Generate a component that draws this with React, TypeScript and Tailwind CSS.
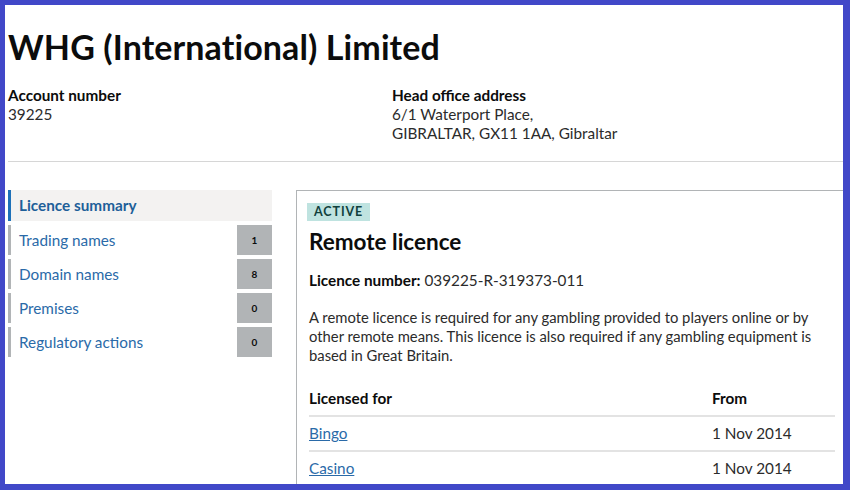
import React from "react";

const navItems = [
  { label: "Trading names", count: "1" },
  { label: "Domain names", count: "8" },
  { label: "Premises", count: "0" },
  { label: "Regulatory actions", count: "0" },
];

export default function App() {
  return (
    <div className="w-[850px] h-[490px] overflow-hidden bg-white border-l-[5px] border-t-[5px] border-r-[7px] border-b-[6px] border-[#4148c8] font-['Lato','Noto_Sans',sans-serif] text-[#0b0c0c]">
      <div className="pl-[3px]">
        <h1 className="text-[34px] font-bold leading-none pt-[25px] tracking-[0.1px]">WHG (International) Limited</h1>
        <div className="flex mt-[22px] text-[15.3px] leading-[19px]">
          <div className="w-[384px]">
            <div className="font-bold">Account number</div>
            <div className="text-[#2b2b2b]">39225</div>
          </div>
          <div>
            <div className="font-bold">Head office address</div>
            <div className="text-[#2b2b2b]">6/1 Waterport Place,</div>
            <div className="text-[#2b2b2b]">GIBRALTAR, GX11 1AA, Gibraltar</div>
          </div>
        </div>
        <div className="mt-[18px] h-px bg-[#d6d6d6]"></div>
        <div className="flex gap-[24px] mt-[28px]">
          <nav className="w-[264px] shrink-0 flex flex-col gap-[4px] text-[15.3px]">
            <div className="h-[31px] flex items-center pl-[8px] border-l-[3px] border-[#1d70b8] bg-[#f3f2f1] font-bold text-[#1d5f99]">
              Licence summary
            </div>
            {navItems.map((n) => (
              <div key={n.label} className="h-[30px] flex items-center justify-between pl-[8px] border-l-[3px] border-[#b1b4b6] text-[#2a6aa8]">
                <span>{n.label}</span>
                <span className="w-[35px] h-[30px] bg-[#b1b4b6] flex items-center justify-center text-[10px] font-bold text-[#0b0c0c]">{n.count}</span>
              </div>
            ))}
          </nav>
          <section className="w-[560px] shrink-0 border border-[#b1b4b6] pl-[12px] pr-[12px] pt-[12px] h-[320px]">
            <div className="flex">
              <span className="bg-[#bfe3e0] text-[#10403c] text-[12.5px] font-bold tracking-[0.9px] px-[7px] h-[18px] leading-[18px] -ml-[2px]">ACTIVE</span>
            </div>
            <h2 className="text-[22.5px] font-bold mt-[8px] leading-[26px]">Remote licence</h2>
            <p className="text-[15.3px] mt-[16px] leading-[19px]"><span className="font-bold">Licence number:</span> <span className="text-[#2b2b2b]">039225-R-319373-011</span></p>
            <p className="text-[14.8px] mt-[18px] leading-[19px] text-[#2b2b2b] whitespace-nowrap">
              A remote licence is required for any gambling provided to players online or by
              <br />
              other remote means. This licence is also required if any gambling equipment is
              <br />
              based in Great Britain.
            </p>
            <div className="mt-[24px] w-[526px] text-[15.3px] leading-[19px]">
              <div className="flex pb-[7px] border-b-2 border-[#e3e3e3] font-bold">
                <div className="w-[403px]">Licensed for</div>
                <div>From</div>
              </div>
              <div className="flex pt-[7px] pb-[7px] border-b-2 border-[#e3e3e3]">
                <div className="w-[403px]"><a className="underline text-[#2a6aa8]">Bingo</a></div>
                <div className="text-[#2b2b2b]">1 Nov 2014</div>
              </div>
              <div className="flex pt-[7px] pb-[7px]">
                <div className="w-[403px]"><a className="underline text-[#2a6aa8]">Casino</a></div>
                <div className="text-[#2b2b2b]">1 Nov 2014</div>
              </div>
            </div>
          </section>
        </div>
      </div>
    </div>
  );
}
